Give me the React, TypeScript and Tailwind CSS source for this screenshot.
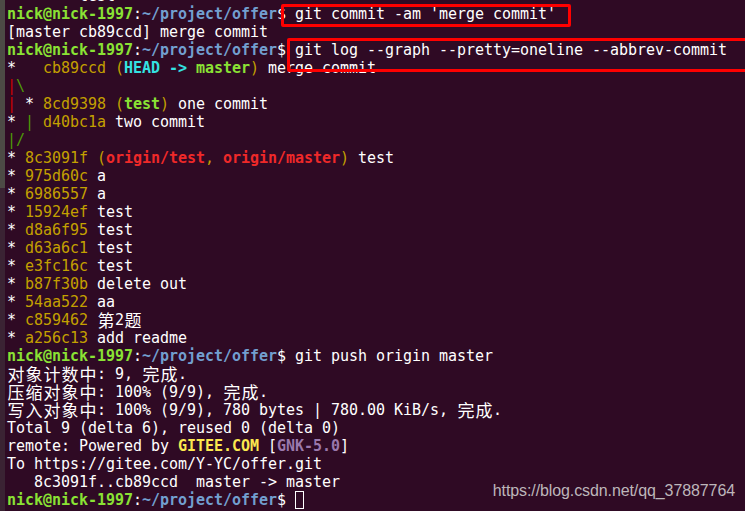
import React from "react";

type Seg = [string, string?];

const Y = "text-[#c4a000]";
const GB = "font-bold text-[#8ae234]";
const CB = "font-bold text-[#34e2e2]";
const RB = "font-bold text-[#ef2929]";
const RED = "text-[#cc0000]";
const GRN = "text-[#4e9a06]";

const prompt: Seg[] = [
  ["nick@nick-1997", GB],
  [":"],
  ["~/project/offer", "font-bold text-[#729fcf]"],
  ["$"],
];

const isWide = (c: string) => /[\u2e80-\u9fff\uff00-\uffef]/.test(c);

function renderText(text: string, key: string) {
  const out: React.ReactNode[] = [];
  let buf = "";
  let i = 0;
  const flush = () => {
    if (buf) {
      out.push(<span key={key + "-t" + i++}>{buf}</span>);
      buf = "";
    }
  };
  for (const ch of text) {
    if (isWide(ch)) {
      flush();
      out.push(
        <span
          key={key + "-w" + i++}
          className="inline-block h-[18px] w-[18px] overflow-visible text-center align-top text-[17px] leading-[18px] font-['Noto_Sans_CJK_SC',sans-serif]"
        >
          {ch}
        </span>
      );
    } else {
      buf += ch;
    }
  }
  flush();
  return out;
}

const commits: [string, string][] = [
  ["975d60c", "a"],
  ["6986557", "a"],
  ["15924ef", "test"],
  ["d8a6f95", "test"],
  ["d63a6c1", "test"],
  ["e3fc16c", "test"],
  ["b87f30b", "delete out"],
  ["54aa522", "aa"],
  ["c859462", "第2题"],
  ["a256c13", "add readme"],
];

const lines: Seg[][] = [
  [["        test"]],
  [...prompt, [" git commit -am 'merge commit'"]],
  [["[master cb89ccd] merge commit"]],
  [...prompt, [" git log --graph --pretty=oneline --abbrev-commit"]],
  [["*   "], ["cb89ccd (", Y], ["HEAD -> ", CB], ["master", GB], [")", Y], [" merge commit"]],
  [["|", RED], ["\\", GRN]],
  [["|", RED], [" * "], ["8cd9398 (", Y], ["test", GB], [")", Y], [" one commit"]],
  [["* "], ["|", GRN], [" "], ["d40bc1a", Y], [" two commit"]],
  [["|/", GRN]],
  [["* "], ["8c3091f (", Y], ["origin/test", RB], [", ", Y], ["origin/master", RB], [")", Y], [" test"]],
  ...commits.map(([h, m]) => [["* "], [h, Y], [" " + m]] as Seg[]),
  [...prompt, [" git push origin master"]],
  [["对象计数中: 9, 完成."]],
  [["压缩对象中: 100% (9/9), 完成."]],
  [["写入对象中: 100% (9/9), 780 bytes | 780.00 KiB/s, 完成."]],
  [["Total 9 (delta 6), reused 0 (delta 0)"]],
  [["remote: Powered by "], ["GITEE.COM", "font-bold text-[#fce94f]"], [" ["], ["GNK-5.0", "font-bold text-[#9a78ac]"], ["]"]],
  [["To https://gitee.com/Y-YC/offer.git"]],
  [["   8c3091f..cb89ccd  master -> master"]],
];

export default function App() {
  return (
    <div className="relative flex w-[745px] h-[511px] overflow-hidden bg-[#2f0a24]">
      <div className="flex w-[5px] shrink-0 flex-col">
        <div className="h-[188px] bg-[#4c4a45]" />
        <div className="flex-1 bg-[#3a2333]" />
      </div>
      <div className="-mt-[13px] flex flex-1 flex-col pl-[2px] font-['DejaVu_Sans_Mono',monospace] text-[15px] leading-[18px] tracking-[-0.03px] text-white whitespace-pre">
        {lines.map((segs, li) => (
          <div key={li} className="h-[18px]">
            {segs.map(([t, c], si) => (
              <span key={si} className={c}>
                {renderText(t, li + "-" + si)}
              </span>
            ))}
          </div>
        ))}
        <div className="h-[18px] flex items-start">
          {prompt.map(([t, c], si) => (
            <span key={si} className={c}>
              {t}
            </span>
          ))}
          <span> </span>
          <span className="inline-block h-[18px] w-[9px] border border-white" />
        </div>
      </div>

      {/* red highlight boxes */}
      <div className="absolute left-[281px] top-[4px] h-[23px] w-[290px] rounded-[2px] border-[3px] border-[#ff0000]" />
      <div className="absolute left-[287px] top-[38px] h-[34px] w-[470px] rounded-[2px] border-[3px] border-[#ff0000]" />

      {/* watermark */}
      <div className="absolute right-[10px] top-[481px] font-['Liberation_Sans',Arial,sans-serif] text-[16px] leading-[20px] tracking-[-0.1px] text-[#bdb6ba]">
        https://blog.csdn.net/qq_37887764
      </div>
    </div>
  );
}
